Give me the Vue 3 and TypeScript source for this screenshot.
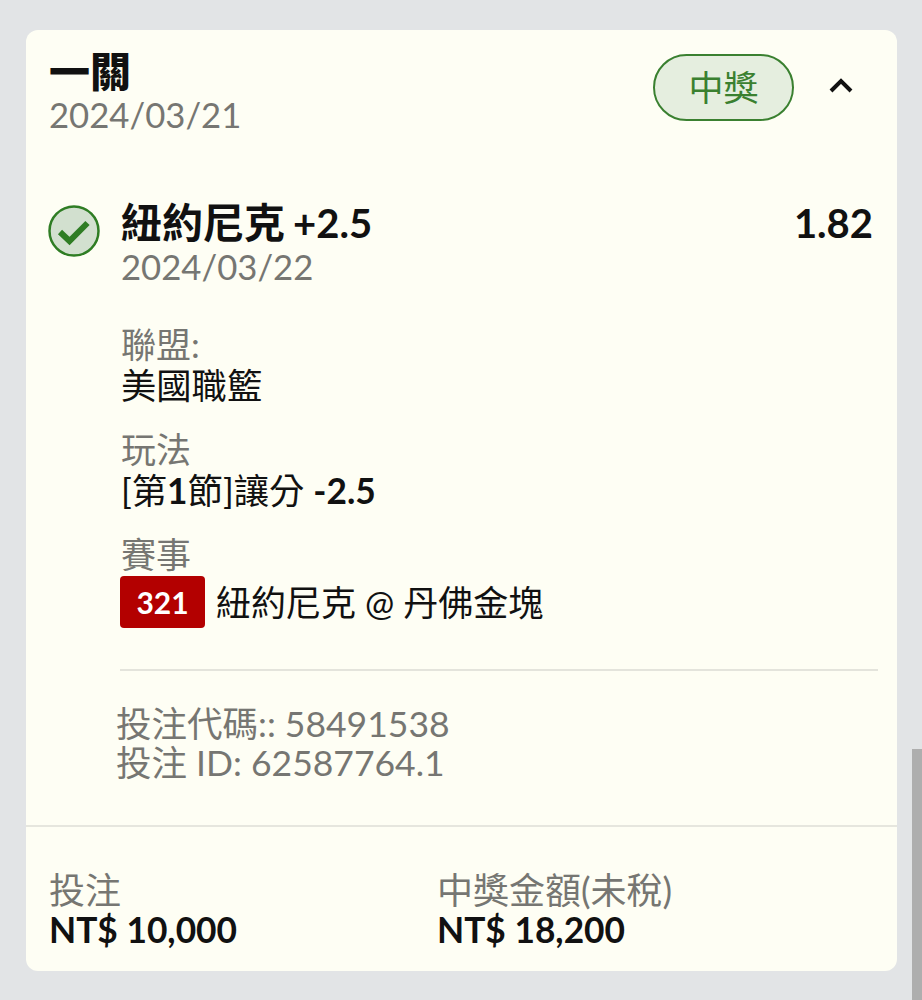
<template>
  <div class="page">
    <div class="card">
      <!-- 頭部 -->
      <div class="card-head">
        <div>
          <div class="title">一關</div>
          <div class="date">2024/03/21</div>
        </div>
        <div class="head-right">
          <span class="status">中獎</span>
          <svg class="chevron" width="26" height="26" viewBox="0 0 26 26" fill="none" stroke="#111" stroke-width="4">
            <polyline points="3 19 13 9 23 19"></polyline>
          </svg>
        </div>
      </div>

      <!-- 投注內容 -->
      <div class="selection">
        <svg class="check" width="52" height="52" viewBox="0 0 52 52">
          <circle cx="26" cy="26" r="24.5" fill="#d2e0cf" stroke="#2f7d24" stroke-width="2.5"></circle>
          <polyline points="12 27 21.5 36 39.5 18" fill="none" stroke="#2f7d24" stroke-width="6"></polyline>
        </svg>
        <div class="selection-body">
          <div class="selection-top">
            <div class="pick-wrap">
              <div class="pick">紐約尼克<span class="pick-num">+2.5</span></div>
              <div class="date">2024/03/22</div>
            </div>
            <div class="odds">1.82</div>
          </div>

          <div class="detail">
            <div class="detail-label">聯盟:</div>
            <div class="detail-value">美國職籃</div>
          </div>
          <div class="detail">
            <div class="detail-label">玩法</div>
            <div class="detail-value">[第<b>1</b>節]讓分 <b>-2.5</b></div>
          </div>
          <div class="detail">
            <div class="detail-label">賽事</div>
            <div class="match">
              <span class="match-no">321</span>
              <span class="detail-value match-name">紐約尼克 @ 丹佛金塊</span>
            </div>
          </div>
          <div class="divider"></div>
        </div>
      </div>

      <div class="codes">
        <div>投注代碼:: 58491538</div>
        <div>投注 ID: 62587764.1</div>
      </div>

      <!-- 底部金額 -->
      <div class="summary">
        <div v-for="item in amounts" :key="item.label" class="amount">
          <div class="amount-label">{{ item.label }}</div>
          <div class="amount-value">{{ item.value }}</div>
        </div>
      </div>
    </div>
    <div class="scrollbar"></div>
  </div>
</template>

<script setup lang="ts">
const amounts = [
  { label: '投注', value: 'NT$ 10,000' },
  { label: '中獎金額(未稅)', value: 'NT$ 18,200' }
]
</script>

<style>
html,
body {
  margin: 0;
  background: #e2e4e6;
}
</style>

<style scoped>
.page {
  position: relative;
  box-sizing: border-box;
  height: 1000px;
  padding: 30px 25px 29px 26px;
  overflow: hidden;
  background: #e2e4e6;
  font-family: Lato, "Noto Sans CJK TC", sans-serif;
  color: #111;
}

.card {
  height: 100%;
  box-sizing: border-box;
  display: flex;
  flex-direction: column;
  background: #fefef4;
  border-radius: 12px;
  overflow: hidden;
}

.card-head {
  display: flex;
  justify-content: space-between;
  align-items: flex-start;
  padding: 20px 24px 0 23px;
}

.title {
  font-size: 41px;
  line-height: 44px;
  font-weight: 900;
}

.date {
  font-size: 34.7px;
  line-height: 42px;
  color: #767672;
}

.head-right {
  display: flex;
  align-items: center;
  gap: 34px;
  padding: 4px 19px 0 0;
}

.status {
  box-sizing: border-box;
  width: 141px;
  height: 67px;
  padding-bottom: 5px;
  display: flex;
  align-items: center;
  justify-content: center;
  border: 2.5px solid #3a8030;
  border-radius: 34px;
  background: #e5eedf;
  color: #3a8030;
  font-size: 35px;
}

.chevron {
  margin-top: -5px;
}

.selection {
  display: flex;
  gap: 20px;
  padding: 64px 19px 0 22px;
}

.check {
  flex-shrink: 0;
  margin-top: 5px;
}

.selection-body {
  flex: 1;
  min-width: 0;
}

.selection-top {
  display: flex;
  justify-content: space-between;
  align-items: flex-start;
  padding-right: 5px;
}

.pick-wrap {
  padding-left: 1px;
}

.pick {
  font-size: 41px;
  line-height: 46px;
  font-weight: 700;
}

.pick-num {
  margin-left: 8px;
  font-size: 40px;
}

.odds {
  font-size: 40px;
  line-height: 46px;
  font-weight: 700;
}

.detail {
  margin-top: 35px;
  padding-left: 1px;
}

.detail + .detail {
  margin-top: 22px;
}

.detail-label {
  font-size: 35px;
  line-height: 42px;
  color: #767672;
}

.detail-value {
  font-size: 35.3px;
  line-height: 41px;
}

.match {
  display: flex;
  align-items: center;
  gap: 11px;
  margin: 1px 0 0 -1px;
}

.match-name {
  font-size: 35px;
}

.match-no {
  width: 85px;
  height: 52px;
  display: flex;
  align-items: center;
  justify-content: center;
  border-radius: 4px;
  background: #b30000;
  color: #fff;
  font-size: 30px;
  font-weight: 700;
}

.divider {
  height: 2px;
  margin-top: 41px;
  background: #e4e4dc;
}

.codes {
  padding: 33px 24px 0 90px;
  font-size: 35.5px;
  line-height: 39px;
  color: #767672;
}

.summary {
  flex: 1;
  display: flex;
  margin-top: 43px;
  padding: 43px 24px 0 23px;
  border-top: 2px solid #e6e6de;
}

.amount {
  width: 388px;
}

.amount-label {
  font-size: 36px;
  line-height: 41px;
  color: #767672;
}

.amount-value {
  font-size: 35.3px;
  line-height: 38px;
  font-weight: 700;
}

/* 捲軸 */
.scrollbar {
  position: absolute;
  top: 749px;
  right: 0;
  bottom: 0;
  width: 10px;
  background: #aeaeae;
}
</style>
